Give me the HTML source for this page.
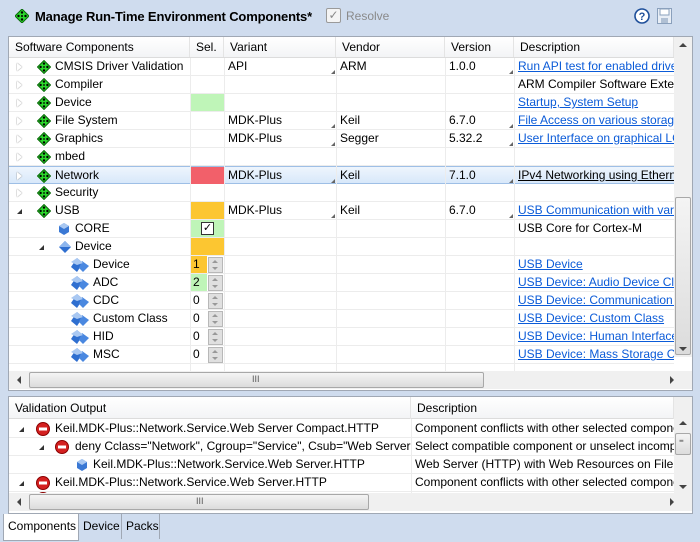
<!DOCTYPE html>
<html><head><meta charset="utf-8"><style>
*{margin:0;padding:0;box-sizing:border-box}
body{width:700px;height:542px;background:#cfdcee;font-family:"Liberation Sans",sans-serif;font-size:12px;color:#000;position:relative;overflow:hidden}
.a{position:absolute;white-space:nowrap;overflow:hidden}
.panel{position:absolute;background:#fff;border:1px solid #a0a8b4}
.hdr{position:absolute;background:linear-gradient(#fff,#f3f4f6);border-bottom:1px solid #dcdcdc}
.hc{position:absolute;top:0;height:20px;line-height:20px;padding-left:6px;border-right:1px solid #e4e4e4}
.row{position:absolute;left:0;height:18px;border-bottom:1px solid #ececec}
.cell{position:absolute;top:0;height:18px;line-height:17px;padding-left:4px;overflow:hidden;white-space:nowrap}
.lk{color:#0b5bd8;text-decoration:underline}
.vl{position:absolute;top:0;width:1px;background:#ececec}
.tri{position:absolute;width:0;height:0}
.sb{position:absolute;background:#f0f0f0}
.thumb{position:absolute;background:linear-gradient(#f4f4f4,#dcdcdc);border:1px solid #a8a8a8;border-radius:2px}
.spin{position:absolute;left:18px;top:1px;width:15px;height:16px;background:#e0e0e0;border:1px solid #b8b8b8}
.corner{position:absolute;right:1px;bottom:2px;width:0;height:0;border-left:4px solid transparent;border-bottom:4px solid #666}
</style></head><body>

<svg class="a" style="left:15px;top:9px" width="14" height="14" viewBox="0 0 14 14"><path d="M7 0L14 7 7 14 0 7Z" fill="#2bd82b" stroke="#0a6a0a"/><circle cx="7" cy="3.5" r="1.2"/><circle cx="7" cy="10.5" r="1.2"/><circle cx="3.5" cy="7" r="1.2"/><circle cx="10.5" cy="7" r="1.2"/><circle cx="7" cy="7" r="1"/></svg>
<div class="a" style="left:35px;top:9px;font-weight:bold;font-size:13px;letter-spacing:-0.15px">Manage Run-Time Environment Components*</div>
<div class="a" style="left:326px;top:8px;width:15px;height:15px;border:1px solid #9a9a9a;border-radius:2px;background:#f4f4f4;color:#888;font-size:12px;line-height:13px;text-align:center">✓</div>
<div class="a" style="left:346px;top:9px;color:#8a8a8a;font-size:12px">Resolve</div>
<svg class="a" style="left:634px;top:8px" width="16" height="16" viewBox="0 0 16 16"><circle cx="8" cy="8" r="7" fill="#fff" stroke="#1e4f9a" stroke-width="1.6"/><text x="8" y="12" font-size="11" font-weight="bold" text-anchor="middle" fill="#1e4f9a" font-family="Liberation Sans">?</text></svg>
<svg class="a" style="left:657px;top:8px" width="15" height="16" viewBox="0 0 15 16"><rect x="0.5" y="0.5" width="14" height="15" fill="#e8eef6" stroke="#8aa0bc"/><rect x="3" y="1" width="9" height="6" fill="#fff" stroke="#8aa0bc"/><rect x="4" y="10" width="7" height="5" fill="#b0c0d4"/></svg>

<div class="panel" style="left:8px;top:36px;width:685px;height:355px">
 <div class="hdr" style="left:0;top:0;width:665px;height:21px">
  <div class="hc" style="left:0;width:181px">Software Components</div>
  <div class="hc" style="left:181px;width:34px">Sel.</div>
  <div class="hc" style="left:215px;width:112px">Variant</div>
  <div class="hc" style="left:327px;width:109px">Vendor</div>
  <div class="hc" style="left:436px;width:69px">Version</div>
  <div class="hc" style="left:505px;width:160px">Description</div>
 </div>
 <div id="rows"></div>
 <div class="sb" style="left:665px;top:0;width:18px;height:320px"></div>
 <div class="a" style="left:670px;top:6px;border-left:4px solid transparent;border-right:4px solid transparent;border-bottom:4px solid #444"></div>
 <div class="thumb" style="left:666px;top:160px;width:16px;height:158px"></div>
 <div class="a" style="left:670px;top:310px;border-left:4px solid transparent;border-right:4px solid transparent;border-top:4px solid #444"></div>
 <div class="sb" style="left:0;top:334px;width:683px;height:18px"></div>
 <div class="a" style="left:8px;top:339px;border-top:4px solid transparent;border-bottom:4px solid transparent;border-right:4px solid #444"></div>
 <div class="thumb" style="left:20px;top:335px;width:455px;height:16px"></div>
 <div class="a" style="left:243px;top:337px;font-size:9px;color:#555">III</div>
 <div class="a" style="left:661px;top:339px;border-top:4px solid transparent;border-bottom:4px solid transparent;border-left:4px solid #444"></div>
</div>

<div class="panel" style="left:8px;top:396px;width:685px;height:118px">
 <div class="hdr" style="left:0;top:0;width:665px;height:22px">
  <div class="hc" style="left:0;width:402px;height:22px;line-height:23px">Validation Output</div>
  <div class="hc" style="left:402px;width:263px;height:22px;line-height:23px">Description</div>
 </div>
 <div id="vrows"></div>
 <div class="sb" style="left:665px;top:0;width:18px;height:96px"></div>
 <div class="a" style="left:670px;top:24px;border-left:4px solid transparent;border-right:4px solid transparent;border-bottom:4px solid #444"></div>
 <div class="thumb" style="left:666px;top:36px;width:16px;height:22px"></div>
 <div class="a" style="left:670px;top:42px;font-size:8px;color:#555;line-height:3px">≡</div>
 <div class="a" style="left:670px;top:88px;border-left:4px solid transparent;border-right:4px solid transparent;border-top:4px solid #444"></div>
 <div class="sb" style="left:0;top:96px;width:683px;height:18px"></div>
 <div class="a" style="left:8px;top:101px;border-top:4px solid transparent;border-bottom:4px solid transparent;border-right:4px solid #444"></div>
 <div class="thumb" style="left:20px;top:97px;width:340px;height:16px"></div>
 <div class="a" style="left:187px;top:99px;font-size:9px;color:#555">III</div>
 <div class="a" style="left:661px;top:101px;border-top:4px solid transparent;border-bottom:4px solid transparent;border-left:4px solid #444"></div>
</div>

<div class="a" style="left:3px;top:514px;width:76px;height:27px;background:#fff;border:1px solid #a0a8b4;border-top:none;line-height:24px;padding-left:4px">Components</div>
<div class="a" style="left:79px;top:514px;width:43px;height:25px;border-right:1px solid #a0a8b4;line-height:24px;padding-left:4px">Device</div>
<div class="a" style="left:122px;top:514px;width:38px;height:25px;border-right:1px solid #a0a8b4;line-height:24px;padding-left:4px">Packs</div>

<script>
const G='<svg width="14" height="14" viewBox="0 0 14 14" style="position:absolute;top:2px"><path d="M7 0.5L13.5 7 7 13.5 0.5 7Z" fill="#2bd82b" stroke="#0a6a0a"/><circle cx="7" cy="3.6" r="1.2"/><circle cx="7" cy="10.4" r="1.2"/><circle cx="3.6" cy="7" r="1.2"/><circle cx="10.4" cy="7" r="1.2"/><circle cx="7" cy="7" r="0.9"/></svg>';
const B1='<svg width="10" height="12" viewBox="0 0 10 12" style="position:absolute;top:3px"><path d="M5 0L10 3V9L5 12 0 9V3Z" fill="#3a78d4"/><path d="M5 0L10 3 5 6 0 3Z" fill="#a9c8f2"/></svg>';
const BD='<svg width="12" height="12" viewBox="0 0 12 12" style="position:absolute;top:3px"><path d="M6 0L12 6 6 12 0 6Z" fill="#2f6fd0"/><path d="M6 0L12 6 6 6 0 6Z" fill="#8db6ee"/></svg>';
const BB='<svg width="18" height="14" viewBox="0 0 18 14" style="position:absolute;top:2px"><path d="M6 0L12 5 6 14 0 9Z" fill="#2f6fd0"/><path d="M11 3L18 8 12 14 8 10Z" fill="#4a88e0"/><path d="M6 0L12 5 6 7 0 4Z" fill="#a9c8f2"/></svg>';
const R='<svg width="14" height="14" viewBox="0 0 14 14" style="position:absolute;top:2px"><circle cx="7" cy="7" r="6.5" fill="#d42020" stroke="#8a0000"/><rect x="3" y="5.5" width="8" height="3" fill="#fff"/></svg>';
function tri(x,open){return open?`<div class="tri" style="left:${x}px;top:7px;border-left:5px solid transparent;border-bottom:5px solid #333"></div>`:`<div class="tri" style="left:${x}px;top:5px;border-top:4px solid transparent;border-bottom:4px solid transparent;border-left:5px solid #fff;filter:drop-shadow(0 0 0.6px #666)"></div>`;}
const rows=[
['CMSIS Driver Validation',0,'t','G','', 'API','ARM','1.0.0','Run API test for enabled drivers',1,1],
['Compiler',0,'t','G','','','','','ARM Compiler Software Extensions',0,0],
['Device',0,'t','G','#bff5b8','','','','Startup, System Setup',1,0],
['File System',0,'t','G','','MDK-Plus','Keil','6.7.0','File Access on various storage devices',1,1],
['Graphics',0,'t','G','','MDK-Plus','Segger','5.32.2','User Interface on graphical LCD',1,1],
['mbed',0,'t','G','','','','','',0,0],
['Network',0,'t','G','#f2606a','MDK-Plus','Keil','7.1.0','IPv4 Networking using Ethernet',2,1],
['Security',0,'t','G','','','','','',0,0],
['USB',0,'o','G','#fcc631','MDK-Plus','Keil','6.7.0','USB Communication with various',1,1],
['CORE',1,'','B1','#bff5b8','','','','USB Core for Cortex-M',0,0,'chk'],
['Device',1,'o','BD','#fcc631','','','','',0,0],
['Device',2,'','BB','#fcc631','','','','USB Device',1,0,'1'],
['ADC',2,'','BB','#bff5b8','','','','USB Device: Audio Device Class',1,0,'2'],
['CDC',2,'','BB','','','','','USB Device: Communication Device',1,0,'0'],
['Custom Class',2,'','BB','','','','','USB Device: Custom Class',1,0,'0'],
['HID',2,'','BB','','','','','USB Device: Human Interface Device',1,0,'0'],
['MSC',2,'','BB','','','','','USB Device: Mass Storage Class',1,0,'0'],
];
const ic={G,B1,BD,BB};
let h='';
rows.forEach((r,i)=>{
 const top=21+18*i, sel=r[0]=='Network';
 let bg=sel?'background:linear-gradient(#eef5fd,#d8e8fa);border-top:1px solid #9ebfe6;border-bottom:1px solid #9ebfe6;':'';
 const lvl=r[1];
 const tx=lvl==0?8:lvl==1?24:35, ix=lvl==0?28:lvl==1?50:62, lx=lvl==0?46:lvl==1?66:84;
 h+=`<div class="row" style="top:${top}px;width:665px;${bg}">`;
 if(r[2])h+=tri(r[2]=='o'?(lvl==0?8:30):tx,r[2]=='o');
 h+=`<div style="position:absolute;left:${ix}px;top:0">${ic[r[3]]}</div>`;
 h+=`<div class="cell" style="left:${lx-4}px;width:${181-lx}px">${r[0]}</div>`;
 h+=`<div class="cell" style="left:181px;width:34px;padding:0">`;
 if(r[4])h+=`<div style="position:absolute;left:0;top:0;width:${r[11]&&r[11]!='chk'?17:34}px;height:17px;background:${r[4]}"></div>`;
 if(r[11]=='chk')h+=`<div style="position:absolute;left:11px;top:2px;width:13px;height:13px;border:1px solid #333;background:#fff;font-size:11px;line-height:11px;text-align:center">✓</div>`;
 else if(r[11])h+=`<div style="position:absolute;left:3px;top:0;line-height:17px">${r[11]}</div><div class="spin"><div style="position:absolute;left:3px;top:2px;border-left:3px solid transparent;border-right:3px solid transparent;border-bottom:3px solid #999"></div><div style="position:absolute;left:3px;top:9px;border-left:3px solid transparent;border-right:3px solid transparent;border-top:3px solid #999"></div></div>`;
 h+=`</div>`;
 h+=`<div class="cell" style="left:215px;width:112px">${r[5]}${r[5]?'<div class="corner"></div>':''}</div>`;
 h+=`<div class="cell" style="left:327px;width:109px">${r[6]}</div>`;
 h+=`<div class="cell" style="left:436px;width:69px">${r[7]}${r[10]?'<div class="corner"></div>':''}</div>`;
 h+=`<div class="cell ${r[9]==1?'lk':''}" style="left:505px;width:160px;${r[9]==2?'text-decoration:underline':''}">${r[8]}</div>`;
 h+=`</div>`;
});
[181,215,327,436,505].forEach(x=>h+=`<div class="vl" style="left:${x}px;top:21px;height:313px"></div>`);
document.getElementById('rows').innerHTML=h;
const v=[
[0,'R','Keil.MDK-Plus::Network.Service.Web Server Compact.HTTP','Component conflicts with other selected components'],
[1,'R','deny Cclass="Network", Cgroup="Service", Csub="Web Server"','Select compatible component or unselect incompatible'],
[2,'B','Keil.MDK-Plus::Network.Service.Web Server.HTTP','Web Server (HTTP) with Web Resources on File System'],
[0,'R','Keil.MDK-Plus::Network.Service.Web Server.HTTP','Component conflicts with other selected components'],
];
let g='';
v.forEach((r,i)=>{
 const top=23+18*i;
 g+=`<div class="row" style="top:${top}px;width:665px">`;
 const lv=r[0];
 if(lv<2)g+=tri(lv==0?10:30,true);
 const ix=lv==0?27:lv==1?46:68, lx=lv==0?46:lv==1?66:84;
 g+=`<div style="position:absolute;left:${ix}px;top:0">${r[1]=='R'?R:B1}</div>`;
 g+=`<div class="cell" style="left:${lx}px;width:${402-lx}px;padding:0">${r[2]}</div>`;
 g+=`<div class="cell" style="left:402px;width:263px">${r[3]}</div></div>`;
});
g+=`<div style="position:absolute;left:27px;top:95px">${R.replace('top:2px','top:0;clip-path:inset(0 0 11px 0)')}</div>`;
g+=`<div class="vl" style="left:402px;top:22px;height:74px"></div>`;
document.getElementById('vrows').innerHTML=g;
</script>
</body></html>
